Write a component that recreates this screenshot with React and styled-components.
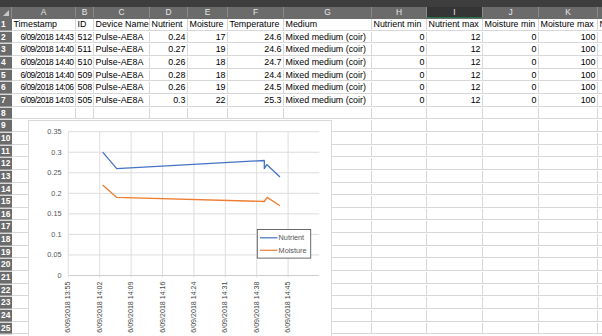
import React from 'react';
import styled, { createGlobalStyle } from 'styled-components';

const GlobalStyle = createGlobalStyle`
  html, body {
    margin: 0;
    padding: 0;
    background: #fff;
    overflow: hidden;
  }
  body {
    font-family: "Liberation Sans", Arial, sans-serif;
  }
`;

const COLS = '12px 64px 18px 56px 38px 40px 56px 88px 55px 56px 56px 59px 40px';
const ROW_H = 12.67;

const Sheet = styled.div`
  position: relative;
  width: 602px;
  height: 336px;
  overflow: hidden;
`;

const TopStrip = styled.div`
  height: 6.7px;
  background: #3e3e3e;
`;

const HeaderRow = styled.div`
  display: grid;
  grid-template-columns: ${COLS};
  height: 12.3px;
  background: #6b6b6b;
`;

const ColHead = styled.div`
  box-sizing: border-box;
  border-right: 1px solid #8b8b8b;
  border-bottom: 1px solid ${({ selected }) => (selected ? '#217346' : '#6b6b6b')};
  background: ${({ selected }) => (selected ? '#353535' : 'transparent')};
  color: #e8e8e8;
  font-size: 8.4px;
  line-height: 11.3px;
  text-align: center;
  overflow: hidden;
`;

const Corner = styled.div`
  position: relative;
  box-sizing: border-box;
  border-right: 1px solid #8b8b8b;
  &::after {
    content: '';
    position: absolute;
    right: 2px;
    bottom: 2px;
    width: 0;
    height: 0;
    border-left: 6px solid transparent;
    border-bottom: 6px solid #c8c8c8;
  }
`;

const Row = styled.div`
  display: grid;
  grid-template-columns: ${COLS};
  height: ${ROW_H}px;
`;

const RowHead = styled.div`
  box-sizing: border-box;
  background: #6b6b6b;
  border-bottom: 1px solid #9a9a9a;
  color: #fff;
  font-size: 8.4px;
  font-weight: bold;
  line-height: 11.67px;
  padding-left: 1px;
  overflow: hidden;
  white-space: nowrap;
`;

const Cell = styled.div`
  box-sizing: border-box;
  border-right: 1px solid #d8d8d8;
  border-bottom: 1px solid #d8d8d8;
  color: #000;
  font-size: ${({ tight }) => (tight ? '8.4px' : '8.9px')};
  letter-spacing: ${({ tight }) => (tight ? '-0.5px' : '0')};
  line-height: 11.67px;
  padding: 0 1.5px;
  text-align: ${({ num }) => (num ? 'right' : 'left')};
  white-space: nowrap;
  overflow: hidden;
`;

const Chart = styled.div`
  position: absolute;
  left: 28px;
  top: 120px;
  width: 304px;
  height: 230px;
  box-sizing: border-box;
  border: 1px solid #d9d9d9;
  background: #fff;
  svg {
    display: block;
  }
`;

const letters = ['A', 'B', 'C', 'D', 'E', 'F', 'G', 'H', 'I', 'J', 'K', 'L'];
const numCols = [true, true, false, true, true, true, false, true, true, true, true, false];

const header = ['Timestamp', 'ID', 'Device Name', 'Nutrient', 'Moisture', 'Temperature', 'Medium',
  'Nutrient min', 'Nutrient max', 'Moisture min', 'Moisture max', 'Nutrient'];

const records = [
  ['6/09/2018 14:43', '512', 'Pulse-AE8A', '0.24', '17', '24.6'],
  ['6/09/2018 14:40', '511', 'Pulse-AE8A', '0.27', '19', '24.6'],
  ['6/09/2018 14:40', '510', 'Pulse-AE8A', '0.26', '18', '24.7'],
  ['6/09/2018 14:40', '509', 'Pulse-AE8A', '0.28', '18', '24.4'],
  ['6/09/2018 14:06', '508', 'Pulse-AE8A', '0.26', '19', '24.5'],
  ['6/09/2018 14:03', '505', 'Pulse-AE8A', '0.3', '22', '25.3'],
].map((r) => [...r, 'Mixed medium (coir)', '0', '12', '0', '100', '']);

const TOTAL_ROWS = 25;

const plotTop = 131.7;
const plotBottom = 275.5;
const plotLeft = 68.3;
const plotRight = 319.3;
const colStep = 31.4;
const yOf = (v) => plotBottom - (v / 0.35) * (plotBottom - plotTop);

const xLabels = ['13:55', '14:02', '14:09', '14:16', '14:24', '14:31', '14:38', '14:45'];
const yLabels = ['0.35', '0.3', '0.25', '0.2', '0.15', '0.1', '0.05', '0'];

const nutrient = [
  [102.7, 0.3], [116.7, 0.26], [264.3, 0.28], [264.3, 0.26], [266.7, 0.27], [280, 0.24],
];
const moisture = [
  [102.7, 0.22], [116.7, 0.19], [264.3, 0.18], [264.3, 0.18], [267.2, 0.19], [280, 0.17],
];

const toPoints = (pts) => pts.map(([x, v]) => `${x},${yOf(v).toFixed(1)}`).join(' ');

function LineChart() {
  const txt = { fontFamily: '"Liberation Sans", Arial, sans-serif', fontSize: 7.3, fill: '#555' };
  const xTxt = { ...txt, fontSize: 7.1, fill: '#444' };
  return (
    <Chart>
      <svg width="302" height="228" viewBox="29 121 302 228">
        {yLabels.map((l, i) => {
          const y = plotTop + ((plotBottom - plotTop) / 7) * i;
          return (
            <g key={l}>
              <line x1={plotLeft} x2={plotRight} y1={y} y2={y} stroke={i === 7 ? '#c8c8c8' : '#d9d9d9'} strokeWidth="0.9" />
              <text x="61.5" y={y + 2.5} textAnchor="end" style={txt}>{l}</text>
            </g>
          );
        })}
        {xLabels.map((l, i) => {
          const x = plotLeft + colStep * i;
          return (
            <g key={l}>
              <line x1={x} x2={x} y1={plotTop} y2={plotBottom + 2} stroke="#d9d9d9" strokeWidth="0.9" />
              <text
                transform={`translate(${x}, 281.5) rotate(-90)`}
                textAnchor="end"
                dominantBaseline="central"
                style={xTxt}
              >
                {`6/09/2018 ${l}`}
              </text>
            </g>
          );
        })}
        <polyline points={toPoints(nutrient)} fill="none" stroke="#4472c4" strokeWidth="1.3" strokeLinejoin="round" />
        <polyline points={toPoints(moisture)} fill="none" stroke="#ed7d31" strokeWidth="1.3" strokeLinejoin="round" />
        <rect x="257.3" y="229.5" width="53.4" height="28.6" fill="#fff" stroke="#5a5a5a" strokeWidth="0.9" />
        <line x1="260" x2="277.5" y1="237.8" y2="237.8" stroke="#4472c4" strokeWidth="1.2" />
        <text x="278.6" y="240.3" style={txt}>Nutrient</text>
        <line x1="260" x2="277.5" y1="250.3" y2="250.3" stroke="#ed7d31" strokeWidth="1.2" />
        <text x="278.6" y="252.8" style={txt}>Moisture</text>
      </svg>
    </Chart>
  );
}

export default function App() {
  const rows = [];
  for (let r = 1; r <= TOTAL_ROWS; r++) {
    let values;
    if (r === 1) values = header;
    else if (r <= 7) values = records[r - 2];
    else values = [];
    rows.push(
      <Row key={r}>
        <RowHead>{r}</RowHead>
        {letters.map((c, i) => (
          <Cell key={c} num={r > 1 && numCols[i]} tight={r > 1 && i === 0}>
            {values[i] || ''}
          </Cell>
        ))}
        <Cell />
      </Row>
    );
  }

  return (
    <>
      <GlobalStyle />
      <Sheet>
        <TopStrip />
        <HeaderRow>
          <Corner />
          {letters.map((c) => (
            <ColHead key={c} selected={c === 'I'}>{c}</ColHead>
          ))}
          <ColHead />
        </HeaderRow>
        {rows}
        <LineChart />
      </Sheet>
    </>
  );
}
